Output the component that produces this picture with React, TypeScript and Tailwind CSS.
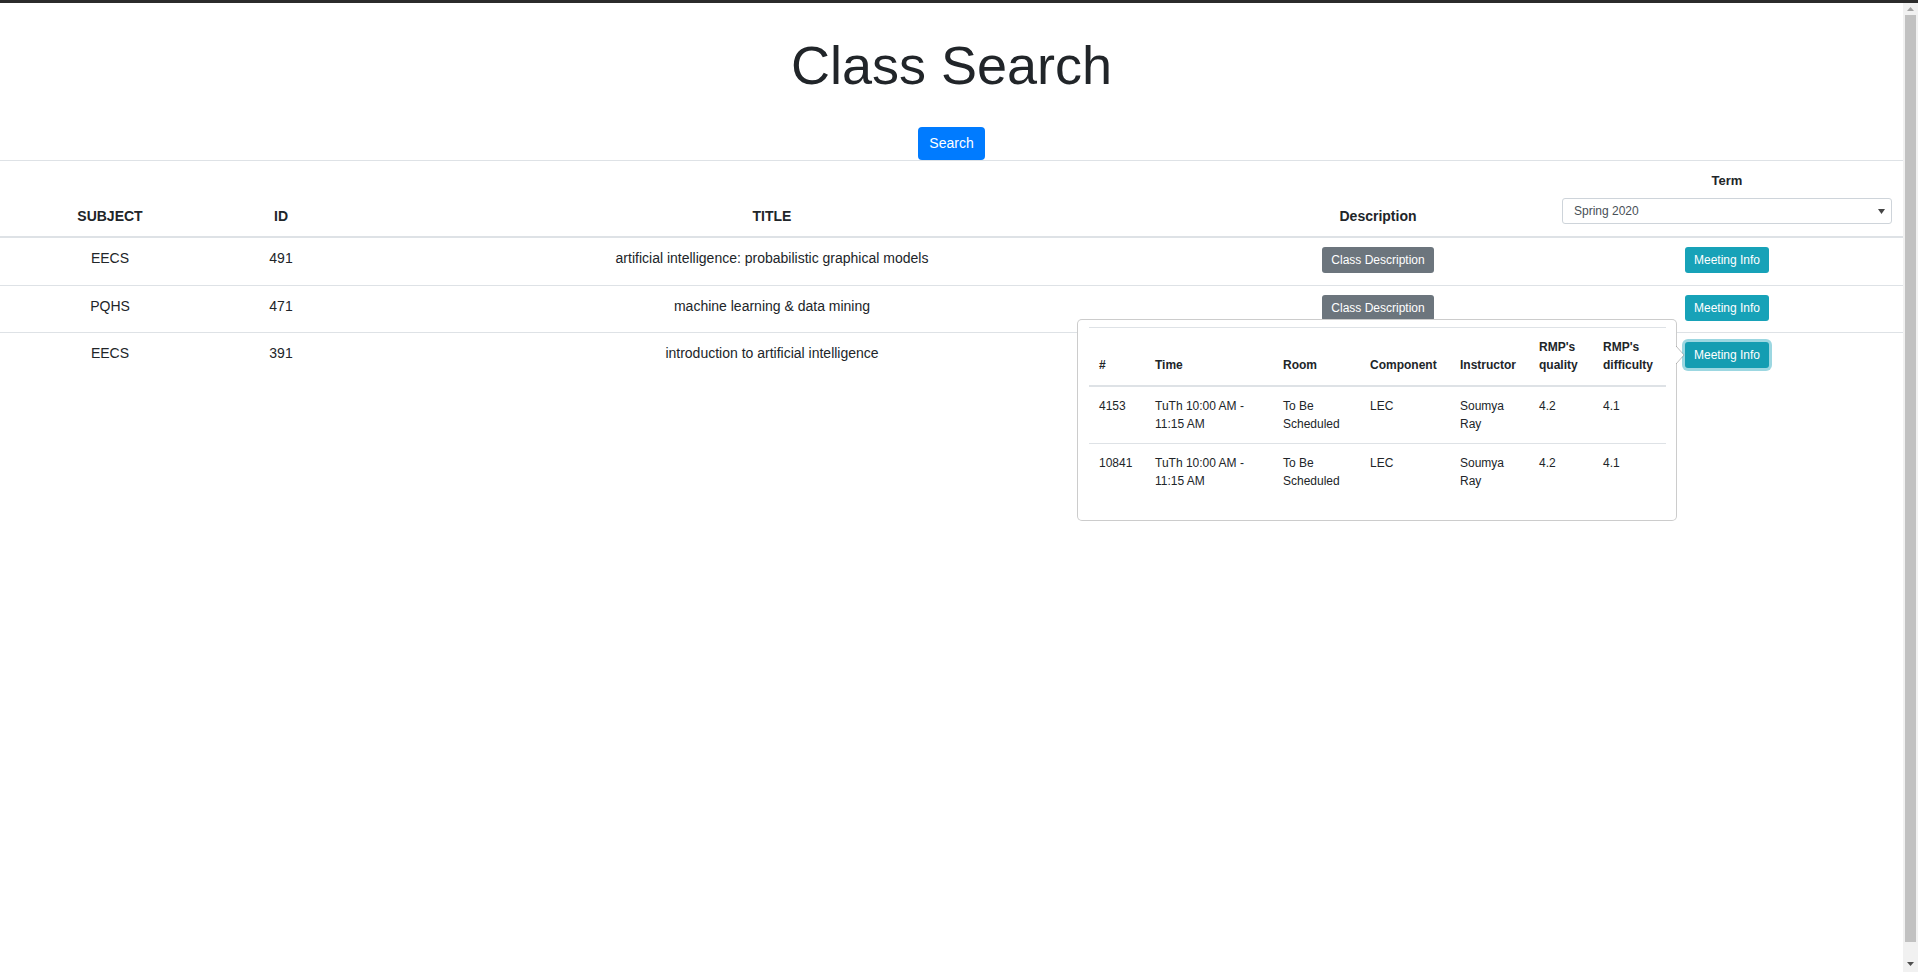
import React from 'react';

interface Course {
  subject: string;
  id: string;
  title: string;
}

interface Meeting {
  num: string;
  time: string[];
  room: string[];
  component: string;
  instructor: string[];
  quality: string;
  difficulty: string;
}

const courses: Course[] = [
  { subject: 'EECS', id: '491', title: 'artificial intelligence: probabilistic graphical models' },
  { subject: 'PQHS', id: '471', title: 'machine learning & data mining' },
  { subject: 'EECS', id: '391', title: 'introduction to artificial intelligence' },
];

const meetings: Meeting[] = [
  {
    num: '4153',
    time: ['TuTh 10:00 AM -', '11:15 AM'],
    room: ['To Be', 'Scheduled'],
    component: 'LEC',
    instructor: ['Soumya', 'Ray'],
    quality: '4.2',
    difficulty: '4.1',
  },
  {
    num: '10841',
    time: ['TuTh 10:00 AM -', '11:15 AM'],
    room: ['To Be', 'Scheduled'],
    component: 'LEC',
    instructor: ['Soumya', 'Ray'],
    quality: '4.2',
    difficulty: '4.1',
  },
];

function Lines({ lines }: { lines: string[] }) {
  return (
    <>
      {lines.map((l, i) => (
        <div key={i} className="whitespace-nowrap">
          {l}
        </div>
      ))}
    </>
  );
}

function MeetingPopover() {
  return (
    <div className="absolute left-[1077px] top-[319px] z-10 h-[202px] w-[600px] rounded-[5px] border border-[rgba(0,0,0,0.2)] bg-white pl-[11px] pr-[10px] pt-[7px] text-[12px] leading-[18px] text-[#212529]">
      <svg className="absolute -right-[9px] top-[26px]" width="9" height="18" viewBox="0 0 9 18">
        <polygon points="0,0 8,9 0,18" fill="white" />
        <polyline points="0,0 8,9 0,18" fill="none" stroke="rgba(0,0,0,0.25)" strokeWidth="1" />
      </svg>
      <table className="w-[577px] table-fixed border-collapse text-left">
        <colgroup>
          <col className="w-[56px]" />
          <col className="w-[128px]" />
          <col className="w-[87px]" />
          <col className="w-[90px]" />
          <col className="w-[79px]" />
          <col className="w-[64px]" />
          <col className="w-[73px]" />
        </colgroup>
        <thead>
          <tr className="border-t border-b-2 border-[#dee2e6] font-bold">
            <th className="px-[10px] pb-[11px] pt-[10px] align-bottom">#</th>
            <th className="px-[10px] pb-[11px] pt-[10px] align-bottom">Time</th>
            <th className="px-[10px] pb-[11px] pt-[10px] align-bottom">Room</th>
            <th className="px-[10px] pb-[11px] pt-[10px] align-bottom">Component</th>
            <th className="px-[10px] pb-[11px] pt-[10px] align-bottom">Instructor</th>
            <th className="px-[10px] pb-[11px] pt-[10px] align-bottom">
              <Lines lines={["RMP's", 'quality']} />
            </th>
            <th className="px-[10px] pb-[11px] pt-[10px] align-bottom">
              <Lines lines={["RMP's", 'difficulty']} />
            </th>
          </tr>
        </thead>
        <tbody>
          {meetings.map((m, i) => (
            <tr key={m.num} className={i > 0 ? 'border-t border-[#dee2e6]' : ''}>
              <td className="p-[10px] align-top">{m.num}</td>
              <td className="p-[10px] align-top">
                <Lines lines={m.time} />
              </td>
              <td className="p-[10px] align-top">
                <Lines lines={m.room} />
              </td>
              <td className="p-[10px] align-top">{m.component}</td>
              <td className="p-[10px] align-top">
                <Lines lines={m.instructor} />
              </td>
              <td className="p-[10px] align-top">{m.quality}</td>
              <td className="p-[10px] align-top">{m.difficulty}</td>
            </tr>
          ))}
        </tbody>
      </table>
    </div>
  );
}

function Scrollbar() {
  return (
    <div className="flex w-[15px] flex-col items-center bg-[#f1f1f1]">
      <div className="flex h-[12px] items-center justify-center">
        <svg width="7" height="4" viewBox="0 0 7 4">
          <polygon points="0,4 3.5,0 7,4" fill="#a3a3a3" />
        </svg>
      </div>
      <div className="h-[927px] w-[11px] bg-[#c1c1c1]" />
      <div className="flex-1" />
      <div className="flex h-[16px] items-center justify-center">
        <svg width="7" height="4" viewBox="0 0 7 4">
          <polygon points="0,0 3.5,4 7,0" fill="#505050" />
        </svg>
      </div>
    </div>
  );
}

export default function App() {
  return (
    <div className="relative flex h-[972px] w-full flex-col overflow-hidden bg-white font-['Liberation_Sans',Arial,sans-serif] text-[#212529]">
      <div className="h-[3px] bg-[#2b2b2b]" />
      <div className="flex flex-1">
        <main className="flex-1">
          <h1 className="mt-[30px] text-center text-[54px] font-normal leading-[1.2]">Class Search</h1>
          <div className="mt-[29px] flex justify-center">
            <button className="rounded-[4px] bg-[#007bff] px-[11px] py-[6px] text-[14px] leading-[21px] text-white">
              Search
            </button>
          </div>

          <table className="w-full table-fixed border-collapse text-[14px] leading-6">
            <colgroup>
              <col className="w-[220px]" />
              <col className="w-[122px]" />
              <col className="w-[860px]" />
              <col className="w-[352px]" />
              <col className="w-[349px]" />
            </colgroup>
            <thead>
              <tr className="border-t border-b-2 border-[#dee2e6] font-bold">
                <th className="pb-2 text-center align-bottom">SUBJECT</th>
                <th className="pb-2 text-center align-bottom">ID</th>
                <th className="pb-2 text-center align-bottom">TITLE</th>
                <th className="pb-2 text-center align-bottom">Description</th>
                <th className="pb-3 pl-2 pr-[11px] pt-2 text-center align-bottom">
                  <div className="text-[13px]">Term</div>
                  <div className="relative mt-[5px]">
                    <select className="block h-[26px] w-full appearance-none rounded-[3px] border border-[#ced4da] bg-white pl-[11px] text-[12px] font-normal text-[#495057]">
                      <option>Spring 2020</option>
                      <option>Fall 2019</option>
                    </select>
                    <svg className="pointer-events-none absolute right-[7px] top-[11px]" width="7" height="5" viewBox="0 0 7 5">
                      <polygon points="0,0 7,0 3.5,5" fill="#444" />
                    </svg>
                  </div>
                </th>
              </tr>
            </thead>
            <tbody>
              {courses.map((c, i) => {
                const h = i === 0 ? 'h-[49px]' : 'h-[47px]';
                return (
                  <tr key={i} className={i > 0 ? 'border-t border-[#dee2e6]' : ''}>
                    <td className={`${h} pt-2 text-center align-top`}>{c.subject}</td>
                    <td className={`${h} pt-2 text-center align-top`}>{c.id}</td>
                    <td className={`${h} pt-2 text-center align-top`}>{c.title}</td>
                    <td className={`${h} pt-[9px] text-center align-top`}>
                      <button className="rounded-[3px] bg-[#6c757d] px-[9px] py-[4px] text-[12px] leading-[18px] text-white">
                        Class Description
                      </button>
                    </td>
                    <td className={`${h} pl-2 pr-[11px] pt-[9px] text-center align-top`}>
                      <button
                        className={
                          i === 2
                            ? 'rounded-[3px] bg-[#149db2] px-[9px] py-[4px] text-[12px] leading-[18px] text-white shadow-[0_0_0_3px_rgba(58,176,195,0.5)]'
                            : 'rounded-[3px] bg-[#17a2b8] px-[9px] py-[4px] text-[12px] leading-[18px] text-white'
                        }
                      >
                        Meeting Info
                      </button>
                    </td>
                  </tr>
                );
              })}
            </tbody>
          </table>
        </main>
        <Scrollbar />
      </div>
      <MeetingPopover />
    </div>
  );
}
